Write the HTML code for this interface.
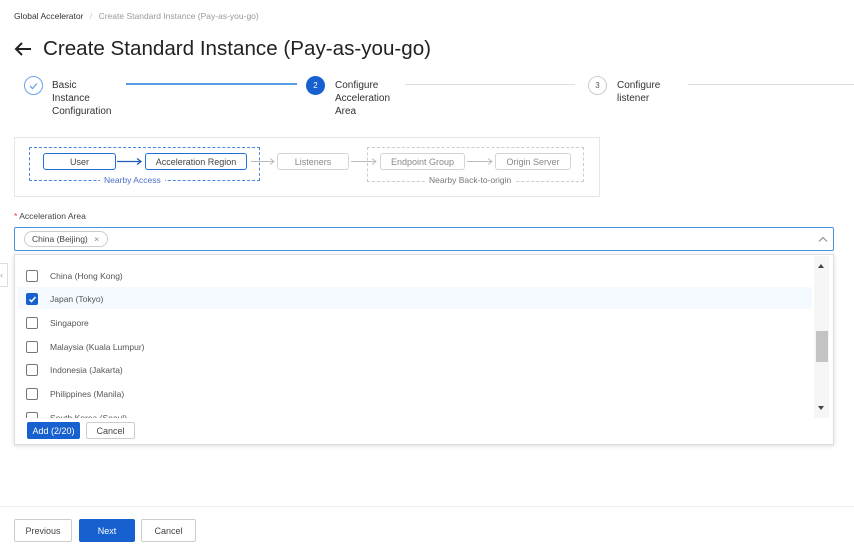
<!DOCTYPE html>
<html><head><meta charset="utf-8"><style>
*{box-sizing:border-box;margin:0;padding:0}
body{width:854px;height:549px;background:#fff;font-family:"Liberation Sans",sans-serif;color:#333;position:relative;overflow:hidden;font-size:9px}
.a{position:absolute}
.box{position:absolute;border:1px solid #1e6fd9;border-radius:3px;font-size:9px;display:flex;align-items:center;justify-content:center;color:#444;background:#fff}
.gbox{position:absolute;border:1px solid #d5d5d5;border-radius:3px;font-size:9px;display:flex;align-items:center;justify-content:center;color:#888;background:#fff}
.row{position:absolute;left:18px;width:794px;height:23px;display:flex;align-items:center;font-size:8.5px;color:#555}
.cb{width:12px;height:12px;border:1px solid #777;border-radius:2px;margin-left:8px;margin-right:12px;background:#fff}
.btn{position:absolute;border:1px solid #ccc;border-radius:2px;display:flex;align-items:center;justify-content:center;font-size:9px;color:#444;background:#fff}
.st{position:absolute;font-size:10px;line-height:13px;color:#333}
</style></head><body>
<div class="a" style="left:14px;top:11px;font-size:8.5px;color:#333">Global Accelerator <span style="color:#ccc;margin:0 4px">/</span> <span style="color:#999">Create Standard Instance (Pay-as-you-go)</span></div>
<svg class="a" style="left:13px;top:41px" width="20" height="16"><path d="M18 8H3M9 2L3 8l6 6" stroke="#222" stroke-width="2" fill="none"/></svg>
<div class="a" style="left:43px;top:37px;font-size:20.6px;color:#222">Create Standard Instance (Pay-as-you-go)</div>

<div class="a" style="left:24px;top:76px;width:19px;height:19px;border:1.5px solid #6aa3e8;border-radius:50%"></div>
<svg class="a" style="left:28px;top:80px" width="11" height="11"><path d="M2 6l2.5 2.5L9 3.5" stroke="#6aa3e8" stroke-width="1.3" fill="none"/></svg>
<div class="st" style="left:52px;top:79px">Basic<br>Instance<br>Configuration</div>
<div class="a" style="left:126px;top:83px;width:171px;height:2px;background:#5b9be6"></div>
<div class="a" style="left:306px;top:76px;width:19px;height:19px;background:#1660cf;border-radius:50%;color:#fff;font-size:8px;display:flex;align-items:center;justify-content:center">2</div>
<div class="st" style="left:335px;top:79px">Configure<br>Acceleration<br>Area</div>
<div class="a" style="left:405px;top:84px;width:170px;height:1px;background:#ddd"></div>
<div class="a" style="left:588px;top:76px;width:19px;height:19px;border:1px solid #ccc;border-radius:50%;color:#555;font-size:8px;display:flex;align-items:center;justify-content:center">3</div>
<div class="st" style="left:617px;top:79px">Configure<br>listener</div>
<div class="a" style="left:688px;top:84px;width:166px;height:1px;background:#ddd"></div>

<div class="a" style="left:14px;top:137px;width:586px;height:60px;border:1px solid #e6e6e6"></div>
<div class="a" style="left:29px;top:147px;width:231px;height:34px;border:1px dashed #4a86d8"></div>
<div class="a" style="left:100px;top:175px;padding:0 4px;background:#fff;color:#4a6fc8;font-size:8.5px">Nearby Access</div>
<div class="a" style="left:367px;top:147px;width:217px;height:35px;border:1px dashed #ccc"></div>
<div class="a" style="left:425px;top:175px;padding:0 4px;background:#fff;color:#777;font-size:8.5px">Nearby Back-to-origin</div>
<div class="box" style="left:43px;top:153px;width:73px;height:17px">User</div>
<svg class="a" style="left:117px;top:157px" width="28" height="9"><path d="M0 4.5h24M20 1.5l4 3-4 3" stroke="#1e5bb8" stroke-width="1.3" fill="none"/></svg>
<div class="box" style="left:145px;top:153px;width:102px;height:17px">Acceleration Region</div>
<svg class="a" style="left:251px;top:157px" width="26" height="9"><path d="M0 4.5h23M19 1.5l4 3-4 3" stroke="#bbb" stroke-width="1" fill="none"/></svg>
<div class="gbox" style="left:277px;top:153px;width:72px;height:17px">Listeners</div>
<svg class="a" style="left:351px;top:157px" width="28" height="9"><path d="M0 4.5h25M21 1.5l4 3-4 3" stroke="#bbb" stroke-width="1" fill="none"/></svg>
<div class="gbox" style="left:380px;top:153px;width:85px;height:17px">Endpoint Group</div>
<svg class="a" style="left:467px;top:157px" width="28" height="9"><path d="M0 4.5h25M21 1.5l4 3-4 3" stroke="#bbb" stroke-width="1" fill="none"/></svg>
<div class="gbox" style="left:495px;top:153px;width:76px;height:17px">Origin Server</div>

<div class="a" style="left:14px;top:211px;font-size:8.5px;color:#444"><span style="color:#e33">*</span> Acceleration Area</div>
<div class="a" style="left:14px;top:227px;width:820px;height:24px;border:1px solid #4a8fe0;border-radius:2px"></div>
<div class="a" style="left:24px;top:231px;width:84px;height:16px;border:1px solid #ccc;border-radius:8px;font-size:8.5px;color:#444;padding-left:7px;line-height:14px">China (Beijing) <span style="color:#888;margin-left:4px">×</span></div>
<svg class="a" style="left:818px;top:236px" width="10" height="7"><path d="M1 5.5l4-4 4 4" stroke="#888" stroke-width="1" fill="none"/></svg>

<div class="a" style="left:0;top:263px;width:8px;height:24px;border:1px solid #ddd;border-left:none;color:#aaa;font-size:9px;line-height:22px">‹</div>
<div class="a" style="left:14px;top:254px;width:820px;height:191px;border:1px solid #ddd;box-shadow:0 1px 4px rgba(0,0,0,.15);background:#fff"></div>
<div class="a" style="left:18px;top:287px;width:794px;height:22px;background:#f4faff"></div>
<div class="row" style="top:264px"><div class="cb"></div>China (Hong Kong)</div>
<div class="row" style="top:287px"><div class="cb" style="background:#1660cf;border-color:#1660cf;position:relative"><svg style="position:absolute;left:1px;top:1px" width="9" height="9"><path d="M1.5 4.5l2 2L7.5 2" stroke="#fff" stroke-width="1.5" fill="none"/></svg></div>Japan (Tokyo)</div>
<div class="row" style="top:311px"><div class="cb"></div>Singapore</div>
<div class="row" style="top:335px"><div class="cb"></div>Malaysia (Kuala Lumpur)</div>
<div class="row" style="top:358px"><div class="cb"></div>Indonesia (Jakarta)</div>
<div class="row" style="top:382px"><div class="cb"></div>Philippines (Manila)</div>
<div class="a" style="left:18px;top:406px;width:794px;height:12px;overflow:hidden"><div class="row" style="top:0;left:0"><div class="cb"></div>South Korea (Seoul)</div></div>
<div class="a" style="left:814px;top:256px;width:15px;height:162px;background:#f6f6f6"></div>
<div class="a" style="left:816px;top:331px;width:12px;height:31px;background:#c3c3c3"></div>
<div class="a" style="left:818px;top:264px;border:3px solid transparent;border-bottom:4px solid #444;border-top:none"></div>
<div class="a" style="left:818px;top:406px;border:3px solid transparent;border-top:4px solid #444;border-bottom:none"></div>
<div class="btn" style="left:27px;top:422px;width:53px;height:17px;background:#1660cf;border-color:#1660cf;color:#fff">Add (2/20)</div>
<div class="btn" style="left:86px;top:422px;width:49px;height:17px">Cancel</div>

<div class="a" style="left:0;top:506px;width:854px;height:1px;background:#eee"></div>
<div class="btn" style="left:14px;top:519px;width:58px;height:23px">Previous</div>
<div class="btn" style="left:79px;top:519px;width:56px;height:23px;background:#1660cf;border-color:#1660cf;color:#fff">Next</div>
<div class="btn" style="left:141px;top:519px;width:55px;height:23px">Cancel</div>
</body></html>
